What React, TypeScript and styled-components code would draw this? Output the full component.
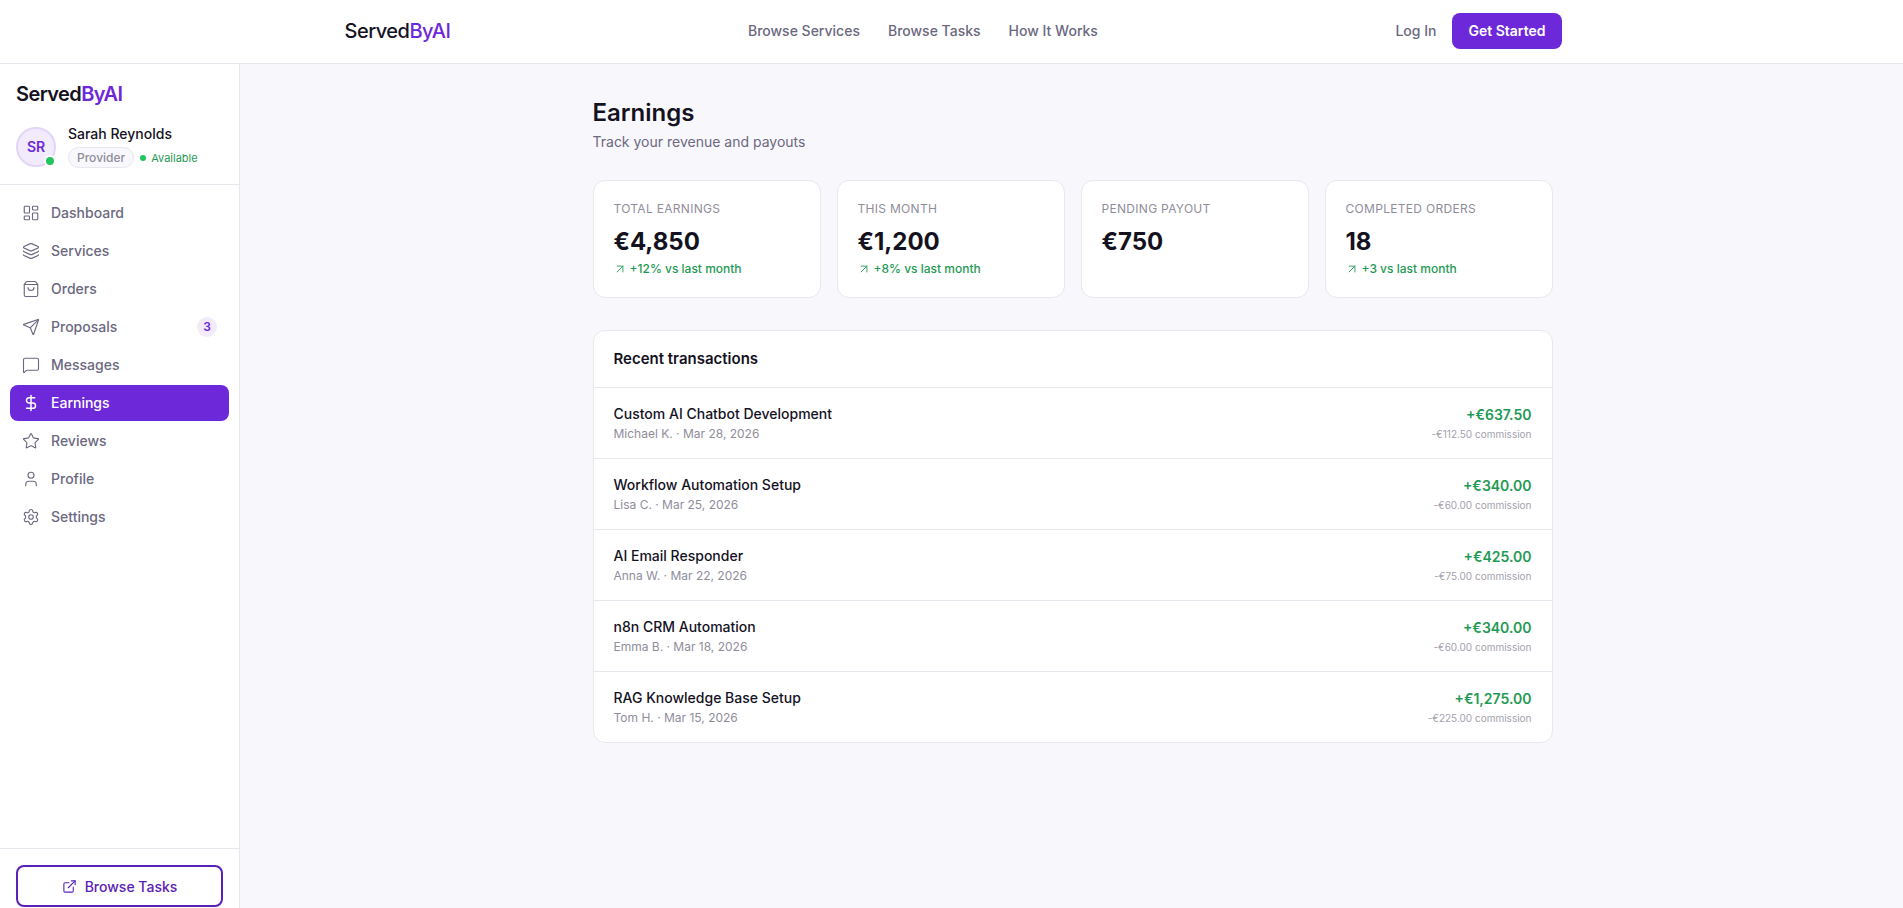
import styled, { createGlobalStyle } from 'styled-components'
import {
  ArrowUpRight,
  DollarSign,
  ExternalLink,
  Layers,
  LayoutDashboard,
  MessageSquare,
  Send,
  Settings,
  ShoppingBag,
  Star,
  User,
} from 'lucide-react'

const purple = '#6d28d9'
const purpleDark = '#5b21b6'
const ink = '#15121f'
const muted = '#6b6880'
const faint = '#8f8d9b'
const line = '#e7e7ed'
const green = '#1f9a55'

const GlobalStyle = createGlobalStyle`
  * { box-sizing: border-box; }
  html, body {
    margin: 0;
    height: 100%;
    overflow: hidden;
    background: #f8f8fc;
    font-family: Inter, "Noto Sans", sans-serif;
    color: ${ink};
  }
`

const Page = styled.div`
  height: 100vh;
  overflow: hidden;
  display: flex;
  flex-direction: column;
`

const TopBar = styled.header`
  flex: none;
  height: 64px;
  background: #fff;
  border-bottom: 1px solid ${line};
`

const TopInner = styled.div`
  max-width: 1280px;
  height: 100%;
  margin: 0 auto;
  padding: 0 30px 2px 33px;
  display: flex;
  align-items: center;
  justify-content: space-between;
`

const Logo = styled.div<{ $bold?: boolean }>`
  font-size: 20px;
  font-weight: ${p => (p.$bold ? 600 : 500)};
  letter-spacing: ${p => (p.$bold ? '-0.6px' : '-0.5px')};
  line-height: 28px;
  color: ${ink};
  span { color: ${purple}; }
`

const TopLinks = styled.nav`
  display: flex;
  gap: 28px;
`

const TopLink = styled.a`
  font-size: 14px;
  font-weight: 500;
  color: ${muted};
`

const TopActions = styled.div`
  display: flex;
  align-items: center;
  gap: 16px;
`

const PrimaryButton = styled.button`
  height: 36px;
  padding: 0 16px;
  border: 0;
  border-radius: 8px;
  background: ${purple};
  color: #fff;
  font: 600 14px Inter, sans-serif;
`

const Body = styled.div`
  flex: 1;
  min-height: 0;
  display: flex;
`

const Sidebar = styled.aside`
  flex: none;
  width: 240px;
  height: 859px;
  background: #fff;
  border-right: 1px solid ${line};
  display: flex;
  flex-direction: column;
`

const SideHead = styled.div`
  flex: none;
  height: 121px;
  padding: 16px 16px 0;
  border-bottom: 1px solid ${line};
`

const UserRow = styled.div`
  margin-top: 17px;
  display: flex;
  align-items: center;
  gap: 12px;
`

const Avatar = styled.div`
  position: relative;
  width: 40px;
  height: 40px;
  border-radius: 50%;
  background: #f1ebfc;
  border: 2px solid #e2d5f8;
  display: flex;
  align-items: center;
  justify-content: center;
  font-size: 14px;
  font-weight: 600;
  color: ${purple};
`

const OnlineDot = styled.i`
  position: absolute;
  right: -2px;
  bottom: -2px;
  width: 12px;
  height: 12px;
  border-radius: 50%;
  background: #22c55e;
  border: 2px solid #fff;
`

const UserName = styled.div`
  font-size: 14px;
  font-weight: 500;
  line-height: 18px;
`

const UserMeta = styled.div`
  margin-top: 4px;
  display: flex;
  align-items: center;
  gap: 6px;
`

const RolePill = styled.span`
  height: 21px;
  padding: 0 8px;
  display: flex;
  align-items: center;
  border-radius: 11px;
  border: 1px solid ${line};
  background: #f8f8fc;
  font-size: 12px;
  font-weight: 500;
  color: ${faint};
`

const Availability = styled.span`
  display: flex;
  align-items: center;
  gap: 5px;
  font-size: 11px;
  color: ${green};
  &::before {
    content: '';
    width: 6px;
    height: 6px;
    border-radius: 50%;
    background: #22c55e;
  }
`

const SideNav = styled.nav`
  flex: 1;
  padding: 10px 10px 0;
  display: flex;
  flex-direction: column;
  gap: 2px;
`

const NavItem = styled.a<{ $active?: boolean }>`
  height: 36px;
  padding: 0 12px 1px;
  display: flex;
  align-items: center;
  gap: 11px;
  border-radius: 8px;
  font-size: 14px;
  font-weight: 500;
  background: ${p => (p.$active ? purple : 'transparent')};
  color: ${p => (p.$active ? '#fff' : muted)};
  svg { flex: none; }
`

const NavBadge = styled.span`
  margin-left: auto;
  width: 20px;
  height: 20px;
  border-radius: 50%;
  background: #f1ebfc;
  color: ${purple};
  font-size: 12px;
  font-weight: 600;
  display: flex;
  align-items: center;
  justify-content: center;
`

const SideFoot = styled.div`
  flex: none;
  padding: 16px;
  border-top: 1px solid ${line};
`

const OutlineButton = styled.button`
  width: 100%;
  height: 42px;
  border: 2px solid ${purpleDark};
  border-radius: 8px;
  background: #fff;
  color: ${purpleDark};
  font: 500 14px Inter, sans-serif;
  display: flex;
  align-items: center;
  justify-content: center;
  gap: 8px;
`

const Main = styled.main`
  flex: 1;
  min-width: 0;
  padding-top: 33px;
`

const Content = styled.div`
  width: 960px;
  margin: 0 auto;
  position: relative;
  left: 1px;
`

const Title = styled.h1`
  margin: 0;
  font-size: 24px;
  font-weight: 600;
  line-height: 32px;
  color: ${ink};
`

const Subtitle = styled.p`
  margin: 3px 0 0;
  font-size: 14px;
  line-height: 20px;
  color: ${muted};
`

const StatGrid = styled.div`
  margin-top: 28px;
  display: grid;
  grid-template-columns: repeat(4, 1fr);
  gap: 16px;
`

const StatCard = styled.div`
  height: 118px;
  padding: 20px;
  background: #fff;
  border: 1px solid ${line};
  border-radius: 12px;
`

const StatLabel = styled.div`
  font-size: 12px;
  line-height: 16px;
  letter-spacing: 0.3px;
  text-transform: uppercase;
  color: ${faint};
`

const StatValue = styled.div`
  margin-top: 9px;
  font-size: 24px;
  font-weight: 700;
  line-height: 32px;
  color: ${ink};
`

const StatDelta = styled.div`
  margin-top: 3px;
  display: flex;
  align-items: center;
  gap: 3px;
  font-size: 12px;
  font-weight: 500;
  line-height: 16px;
  color: ${green};
  svg { margin-left: -1px; }
`

const Panel = styled.section`
  margin-top: 32px;
  background: #fff;
  border: 1px solid ${line};
  border-radius: 12px;
  overflow: hidden;
`

const PanelHead = styled.h2`
  margin: 0;
  height: 56px;
  padding: 0 20px 2px;
  display: flex;
  align-items: center;
  font-size: 15px;
  font-weight: 600;
  color: ${ink};
`

const TxRow = styled.div`
  height: 71px;
  padding: 0 20px;
  border-top: 1px solid ${line};
  display: flex;
  align-items: center;
  justify-content: space-between;
`

const TxInfo = styled.div`
  padding-top: 1px;
`

const TxTitle = styled.div`
  font-size: 14px;
  font-weight: 500;
  line-height: 20px;
  color: ${ink};
`

const TxSub = styled.div`
  margin-top: 1px;
  font-size: 12px;
  line-height: 18px;
  color: ${faint};
`

const TxAmounts = styled.div`
  text-align: right;
`

const TxAmount = styled.div`
  font-size: 14px;
  font-weight: 600;
  line-height: 20px;
  color: ${green};
`

const TxFee = styled.div`
  margin-top: 1px;
  font-size: 10px;
  line-height: 16px;
  color: #a3a1ad;
`

const navItems = [
  { label: 'Dashboard', icon: LayoutDashboard },
  { label: 'Services', icon: Layers },
  { label: 'Orders', icon: ShoppingBag },
  { label: 'Proposals', icon: Send, badge: 3 },
  { label: 'Messages', icon: MessageSquare },
  { label: 'Earnings', icon: DollarSign, active: true },
  { label: 'Reviews', icon: Star },
  { label: 'Profile', icon: User },
  { label: 'Settings', icon: Settings },
]

const stats = [
  { label: 'Total earnings', value: '€4,850', delta: '+12% vs last month' },
  { label: 'This month', value: '€1,200', delta: '+8% vs last month' },
  { label: 'Pending payout', value: '€750' },
  { label: 'Completed orders', value: '18', delta: '+3 vs last month' },
]

const transactions = [
  { title: 'Custom AI Chatbot Development', sub: 'Michael K. · Mar 28, 2026', amount: '+€637.50', fee: '-€112.50 commission' },
  { title: 'Workflow Automation Setup', sub: 'Lisa C. · Mar 25, 2026', amount: '+€340.00', fee: '-€60.00 commission' },
  { title: 'AI Email Responder', sub: 'Anna W. · Mar 22, 2026', amount: '+€425.00', fee: '-€75.00 commission' },
  { title: 'n8n CRM Automation', sub: 'Emma B. · Mar 18, 2026', amount: '+€340.00', fee: '-€60.00 commission' },
  { title: 'RAG Knowledge Base Setup', sub: 'Tom H. · Mar 15, 2026', amount: '+€1,275.00', fee: '-€225.00 commission' },
]

export default function App() {
  return (
    <Page>
      <GlobalStyle />
      <TopBar>
        <TopInner>
          <Logo>Served<span>ByAI</span></Logo>
          <TopLinks>
            <TopLink>Browse Services</TopLink>
            <TopLink>Browse Tasks</TopLink>
            <TopLink>How It Works</TopLink>
          </TopLinks>
          <TopActions>
            <TopLink>Log In</TopLink>
            <PrimaryButton>Get Started</PrimaryButton>
          </TopActions>
        </TopInner>
      </TopBar>
      <Body>
        <Sidebar>
          <SideHead>
            <Logo $bold>Served<span>ByAI</span></Logo>
            <UserRow>
              <Avatar>
                SR
                <OnlineDot />
              </Avatar>
              <div>
                <UserName>Sarah Reynolds</UserName>
                <UserMeta>
                  <RolePill>Provider</RolePill>
                  <Availability>Available</Availability>
                </UserMeta>
              </div>
            </UserRow>
          </SideHead>
          <SideNav>
            {navItems.map(({ label, icon: Icon, badge, active }) => (
              <NavItem key={label} $active={active}>
                <Icon size={18} strokeWidth={active ? 2 : 1.5} />
                {label}
                {badge && <NavBadge>{badge}</NavBadge>}
              </NavItem>
            ))}
          </SideNav>
          <SideFoot>
            <OutlineButton>
              <ExternalLink size={15} strokeWidth={1.75} />
              Browse Tasks
            </OutlineButton>
          </SideFoot>
        </Sidebar>
        <Main>
          <Content>
            <Title>Earnings</Title>
            <Subtitle>Track your revenue and payouts</Subtitle>
            <StatGrid>
              {stats.map(stat => (
                <StatCard key={stat.label}>
                  <StatLabel>{stat.label}</StatLabel>
                  <StatValue>{stat.value}</StatValue>
                  {stat.delta && (
                    <StatDelta>
                      <ArrowUpRight size={14} strokeWidth={1.5} />
                      {stat.delta}
                    </StatDelta>
                  )}
                </StatCard>
              ))}
            </StatGrid>
            <Panel>
              <PanelHead>Recent transactions</PanelHead>
              {transactions.map(tx => (
                <TxRow key={tx.title + tx.sub}>
                  <TxInfo>
                    <TxTitle>{tx.title}</TxTitle>
                    <TxSub>{tx.sub}</TxSub>
                  </TxInfo>
                  <TxAmounts>
                    <TxAmount>{tx.amount}</TxAmount>
                    <TxFee>{tx.fee}</TxFee>
                  </TxAmounts>
                </TxRow>
              ))}
            </Panel>
          </Content>
        </Main>
      </Body>
    </Page>
  )
}
